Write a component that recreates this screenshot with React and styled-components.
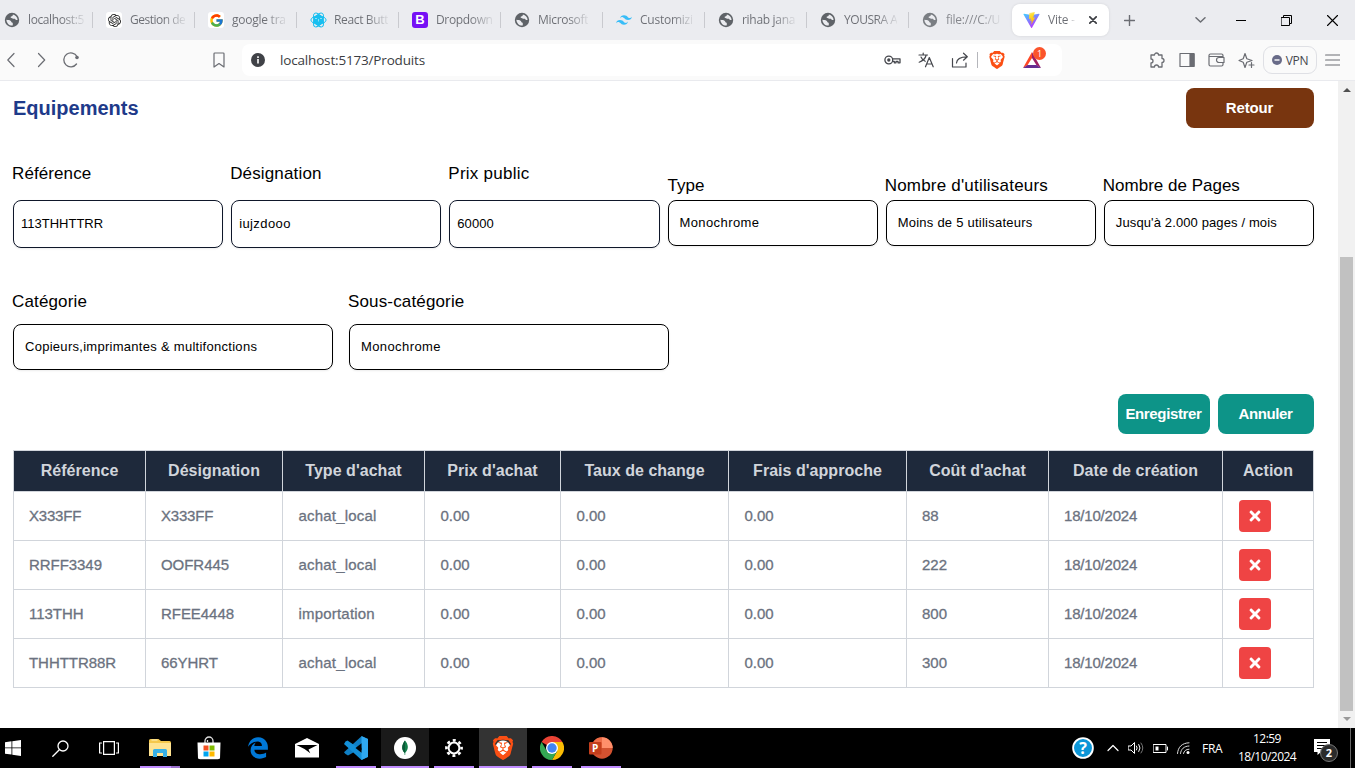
import React from "react";
import styled, { createGlobalStyle } from "styled-components";
import { SiBrave, SiOpenai, SiTailwindcss } from "react-icons/si";
import { FcGoogle } from "react-icons/fc";
import { FaTimes } from "react-icons/fa";
import { FaEdgeLegacy } from "react-icons/fa6";

const Global = createGlobalStyle`
  *, *::before, *::after { box-sizing: border-box; }
  body { margin: 0; background: #fff; overflow: hidden; }
  button, input { font: inherit; }
  svg { display: block; flex: none; }
`;

const uiFont = `"Open Sans", "Noto Sans", sans-serif`;

const Screen = styled.div`
  width: 1355px; height: 768px; display: flex; flex-direction: column;
  font-family: "Liberation Sans", Arial, sans-serif; color: #000; overflow: hidden;
`;

/* ---------- browser chrome ---------- */
const TabStrip = styled.div`
  height: 40px; flex: none; display: flex; align-items: center; background: #ebecf0; font-family: ${uiFont};
`;
const Tab = styled.div`
  width: ${p => (p.$first ? 93 : p.$last ? 103 : 102)}px; height: 16px; flex: none;
  padding-left: ${p => (p.$first ? 4 : 13)}px;
  display: flex; align-items: center; gap: 8px;
  border-right: 1px solid ${p => (p.$last ? "transparent" : "#c9cacf")};
  opacity: ${p => (p.$last ? 0.8 : 1)};
`;
const TabIcon = styled.span`
  width: 16px; height: 16px; flex: none; display: flex; align-items: center; justify-content: center;
  border-radius: 3px; background: ${p => p.$bg || "transparent"};
  color: #fff; font: bold 13px/16px "Liberation Sans", sans-serif;
`;
const TabTitle = styled.span`
  white-space: nowrap; font-size: 12px; line-height: 16px; letter-spacing: ${p => p.$track || 0}px;
  color: transparent; background: linear-gradient(90deg, #6b6d73 ${p => p.$fade || 60}%, rgba(107,109,115,.12) 100%);
  background-clip: text; -webkit-background-clip: text;
`;
const ActiveTab = styled.div`
  width: 97px; height: 32px; flex: none; margin-right: 15px; padding: 0 12px 0 11px;
  display: flex; align-items: center; gap: 8px; background: #fff; border-radius: 8px;
  box-shadow: 0 0 3px rgba(0,0,0,.1);
  & > :last-child { margin-left: auto; }
`;
const WindowButtons = styled.div`
  flex: 1; display: flex; align-items: center; justify-content: flex-end; gap: 35px; padding-right: 17px;
  & > :first-child { margin-right: -5px; }
`;
const Toolbar = styled.div`
  height: 41px; flex: none; display: flex; align-items: center; background: #fafafa;
  border-bottom: 1px solid #e9eaee; font-family: ${uiFont};
`;
const NavButtons = styled.div`
  width: 242px; display: flex; align-items: center; padding: 0 17px 0 4px; gap: 13px;
  & > :last-child { margin-left: auto; }
  & > :nth-child(3) { margin-left: 1px; }
`;
const AddressBar = styled.div`
  width: 820px; height: 32px; background: #fff; border-radius: 8px; padding: 0 19px 0 9px;
  display: flex; align-items: center;
`;
const Url = styled.span`
  flex: 1; margin-left: 15px; font-size: 13.5px; letter-spacing: -0.17px; color: #3b3d42;
`;
const AddressActions = styled.div`display: flex; align-items: center; gap: 17px;`;
const Divider = styled.i`width: 1px; height: 16px; background: #b5b6bb; margin: 0 -7px 0 -9px;`;
const RewardsIcon = styled.span`position: relative; display: flex; width: 20px;`;
const RewardsCount = styled.b`
  position: absolute; left: 10px; top: -5px; width: 13px; height: 13px; border-radius: 50%;
  background: #fb542b; color: #fff; font: 9px/13px ${uiFont}; text-align: center;
`;
const ToolbarRight = styled.div`
  flex: 1; display: flex; align-items: center; justify-content: flex-end; gap: 13px; padding-right: 15px;
`;
const Vpn = styled.div`
  height: 28px; width: 54px; margin: 0 -5px 0 -5px; display: flex; align-items: center; justify-content: center; gap: 4px;
  border: 1px solid #dfe0e5; border-radius: 9px; font-size: 12px; letter-spacing: -0.3px; color: #45474d;
`;

/* ---------- page ---------- */
const Viewport = styled.div`height: 647px; flex: none; display: flex;`;
const Page = styled.main`width: 1338px; padding: 7px 24px 0 13px; display: flex; flex-direction: column;`;
const PageHeader = styled.header`height: 40px; display: flex; align-items: center; justify-content: space-between;`;
const Title = styled.h1`
  margin: 0; font-size: 20px; line-height: 28px; letter-spacing: 0; color: #1e3a8a;
`;
const Button = styled.button`
  width: ${p => p.$w}px; height: 40px; padding: 0 1px 2px 0; border: 0; border-radius: 8px;
  background: ${p => p.$bg || "#0d9488"}; color: #fff; font-weight: bold; font-size: 15px;
  letter-spacing: ${p => p.$track || 0}px;
`;
const SpecRow = styled.div`margin-top: 34px; height: 86px; display: grid; grid-template-columns: repeat(6, 1fr); gap: 8px;`;
const CategoryRow = styled.div`margin-top: 42px; display: flex; gap: 16px;`;
const Field = styled.label`
  width: ${p => (p.$w ? p.$w + "px" : "auto")}; padding-top: ${p => (p.$drop ? 12 : 0)}px;
  display: flex; flex-direction: column; gap: ${p => p.$gap}px;
`;
const FieldLabel = styled.span`
  margin-left: ${p => (p.$shift === undefined ? -1 : p.$shift)}px; font-size: 17px; line-height: 24px; letter-spacing: ${p => p.$track}px; white-space: nowrap;
`;
const Control = styled.span`
  height: ${p => (p.$input ? 48 : 46)}px; padding: 0 ${p => (p.$input ? 7 : 11)}px 2px; display: flex; align-items: center;
  border: 1px solid ${p => (p.$input ? "#0f172a" : "#000")}; border-radius: 8px; background: #fff;
  box-shadow: 0 1px 2px rgba(0,0,0,.08); font-size: 13px; letter-spacing: ${p => p.$track}px; white-space: nowrap;
`;
const Actions = styled.div`margin-top: 24px; display: flex; justify-content: flex-end; gap: 8px;`;
const Table = styled.table`
  margin-top: 16px; width: 1301px; table-layout: fixed; border-collapse: separate; border-spacing: 0;
  border-top: 1px solid #d1d5db; border-left: 1px solid #d1d5db;
`;
const HeadCell = styled.th`
  height: 41px; padding: 0; background: #1e293b; color: #d1d5db; font-size: 16px; text-align: center;
  letter-spacing: ${p => p.$track}px; white-space: nowrap;
  border-right: 1px solid #d1d5db; border-bottom: 1px solid #d1d5db;
`;
const Cell = styled.td`
  height: 49px; padding: 0 15px 2px ${p => p.$pad || 15}px; color: #6b7280; font-size: 15px; letter-spacing: ${p => p.$track || 0}px;
  -webkit-text-stroke: 0.3px #6b7280; white-space: nowrap;
  border-right: 1px solid #d1d5db; border-bottom: 1px solid #d1d5db;
`;
const ActionCell = styled(Cell)`padding: 0 15px 0 16px;`;
const DeleteButton = styled.button`
  width: 32px; height: 32px; padding: 0; border: 0; border-radius: 4px; background: #ef4444; color: #fff;
  display: flex; align-items: center; justify-content: center; -webkit-text-stroke: 0;
`;
const Scrollbar = styled.div`
  width: 17px; background: #f1f1f1; display: flex; flex-direction: column; align-items: center; padding: 7px 0;
`;
const Thumb = styled.div`width: 13px; height: 454px; margin: 165px 0 auto; background: #c1c1c1;`;
const Arrow = styled.i`
  width: 0; height: 0; border: 4px solid transparent; border-top-width: 0; border-bottom: 4px solid #505050;
  transform: ${p => (p.$down ? "rotate(180deg)" : "none")}; opacity: ${p => (p.$down ? 0.55 : 1)};
`;

/* ---------- taskbar ---------- */
const Taskbar = styled.footer`height: 40px; flex: none; display: flex; background: #000; color: #fff; font-family: ${uiFont};`;
const SystemButtons = styled.div`
  width: 136px; display: flex; align-items: center; padding-left: 5px; gap: 31px;
  & > :last-child { margin-left: -1px; }
`;
const Apps = styled.div`display: flex; gap: 1px;`;
const AppSlot = styled.div`
  width: 48px; height: 40px; display: flex; flex-direction: column; align-items: center; justify-content: space-between;
  padding-top: 8px; background: ${p => p.$bg || "transparent"};
`;
const AppIcon = styled.span`width: 24px; height: 24px; display: flex; align-items: center; justify-content: center;`;
const RunningBar = styled.i`
  width: ${p => p.$w || 40}px; height: 2px; background: #c08cff;
  border-right: ${p => (p.$stack ? "9px solid #9a70cc" : "0")};
`;
const LionBacking = styled.span`
  display: flex; color: #fb4f14; background: radial-gradient(circle, #fff 0 7px, transparent 8px);
`;
const Tray = styled.div`flex: 1; display: flex; align-items: center; justify-content: flex-end;`;
const TrayIcons = styled.div`
  display: flex; align-items: center; gap: 9px; margin-right: 12px;
  & > :first-child { margin-right: 4px; }
`;
const Language = styled.span`font-size: 12px; letter-spacing: -0.3px; width: 22px;`;
const Clock = styled.div`
  width: 86px; text-align: center; font-size: 12px; line-height: 18px; letter-spacing: -0.55px;
`;
const Notifications = styled.span`position: relative; width: 36px; margin-left: 4px; height: 16px; margin-top: -2px;`;
const NotificationCount = styled.b`
  position: absolute; left: 6px; top: 5px; width: 18px; height: 18px; border-radius: 50%; border: 1px solid #777;
  background: #2b2b2b; font: bold 11px/16px ${uiFont}; text-align: center;
`;
const DesktopEdge = styled.i`width: 1px; height: 40px; background: #666; margin-right: 4px;`;

/* ---------- drawings ---------- */
const Line = ({ w = 16, h = w, vb = `0 0 ${w} ${h}`, c = "#6b6d73", s = 1.2, children, ...r }) => (
  <svg width={w} height={h} viewBox={vb} fill="none" stroke={c} strokeWidth={s} strokeLinejoin="round" strokeLinecap="round" {...r}>{children}</svg>
);
const Globe = () => (
  <svg width="16" height="16" viewBox="0 0 16 16">
    <circle cx="8" cy="8" r="7.200" fill="#5f6368" />
    <path d="M2.400 7.700c1.800.3 3.200.2 4.100 1 1 .8.5 1.500 1.500 1.700 1 .3 1 1 .7 3.200-3.300.3-6.200-2.400-6.300-5.900zM8.900 2.500c-.2 1.600-.7 1.700-1.700 2-.9.3-.7 1.300.2 1.400 1.100.2 1.300.9 2.300.9 1.200-.1 1.500-.1 1.800.7.300.800 1.300.600 2.100.600-.1-3-2-5-4.700-5.600z" fill="#ebecf0" />
  </svg>
);
const Atom = () => (
  <svg width="17" height="16" viewBox="0 0 16 16" fill="none" stroke="#18bff0" strokeWidth="1">
    <circle cx="8" cy="8" r="5.400" fill="#18bff0" stroke="none" />
    <ellipse cx="8" cy="8" rx="7.600" ry="3.900" />
    <ellipse cx="8" cy="8" rx="7.600" ry="3.900" transform="rotate(60 8 8)" />
    <ellipse cx="8" cy="8" rx="7.600" ry="3.900" transform="rotate(120 8 8)" />
    <path d="M4.500 6.500h2M9.500 6.500h2M8 7v2.500" stroke="#b9ecfb" strokeWidth=".7" />
  </svg>
);
const Vite = () => (
  <svg width="17" height="16" viewBox="0 0 32 32">
    <defs>
      <linearGradient id="va" x1="0" y1="0" x2=".6" y2="1"><stop stopColor="#41d1ff" /><stop offset="1" stopColor="#bd34fe" /></linearGradient>
      <linearGradient id="vb" x1=".4" y1="0" x2=".6" y2="1"><stop stopColor="#ffea83" /><stop offset=".2" stopColor="#ffdd35" /><stop offset="1" stopColor="#ffa800" /></linearGradient>
    </defs>
    <path d="M31.900 5 17 31.300a1 1 0 0 1-1.700 0L.1 5a1 1 0 0 1 1-1.500L16 6.100l14.900-2.600a1 1 0 0 1 1 1.500z" fill="url(#va)" />
    <path d="m22.700 0-11 2.200-.7 11.600 3.700-.8-1 4.900 3-.9-1.400 8.500 8-14.600-4 .8z" fill="url(#vb)" />
  </svg>
);
const Chrome = () => (
  <svg width="24" height="24" viewBox="0 0 24 24">
    <path d="M12 12 1.600 6A12 12 0 0 1 22.400 6z" fill="#ea4335" />
    <path d="M12 6h10.400A12 12 0 0 1 12 24l5.200-9z" fill="#fbbc04" />
    <path d="M6.800 15 1.600 6A12 12 0 0 0 12 24l5.200-9z" fill="#34a853" />
    <circle cx="12" cy="12" r="6" fill="#fff" /><circle cx="12" cy="12" r="4.700" fill="#4285f4" />
  </svg>
);
const Explorer = () => (
  <svg width="22" height="20" viewBox="0 0 22 20">
    <path d="M0 2.500Q0 1 1.500 1h8L12 3h8.500Q22 3 22 4.500V18H0z" fill="#f5c84c" />
    <path d="M0 5h22v13H0z" fill="#ffe391" /><path d="M2.500 1.500h6v1h-6z" fill="#fff3c0" />
    <path d="M4 19v-6.500Q4 11 5.500 11h11q1.500 0 1.500 1.500V19h-4v-4H8v4z" fill="#37b0e6" />
  </svg>
);
const Store = () => (
  <svg width="24" height="24" viewBox="0 0 24 24">
    <path d="M8 8V5a4 4 0 0 1 8 0v3M10.500 6V4" fill="none" stroke="#ddd" strokeWidth="1.300" />
    <path d="M.5 6.500h23L23 22.500l-2 .8H3l-2-.8z" fill="#fff" />
    <path d="M6.500 9.500h5v5h-5z" fill="#f25022" /><path d="M12.500 9.500h5v5h-5z" fill="#7fba00" />
    <path d="M6.500 15.500h5v5h-5z" fill="#00a4ef" /><path d="M12.500 15.500h5v5h-5z" fill="#ffb900" />
  </svg>
);
const Mail = () => (
  <svg width="24" height="20" viewBox="0 0 24 20">
    <path d="M0 6 12 0l12 6v13.500H0z" fill="#fff" />
    <path d="M1.500 7h21L13.500 11.500l1.800 3.700L9.500 11z" fill="#000" />
  </svg>
);
const VsCode = () => (
  <svg width="24" height="24" viewBox="0 0 24 24">
    <path d="M17.500.2 24 3v5L4 19.500 1.500 18 0 16.200z" fill="#0f7fc5" />
    <path d="M1.500 5.500 3.500 4.500 24 18.500v2L17.500 24 0 8z" fill="#1390d8" />
    <path d="M17.500 0 24 3v18l-6.500 3z" fill="#2fa8f0" /><path d="M17.500 7.300v9.400L11.500 12z" fill="#000" />
  </svg>
);
const Mongo = () => (
  <svg width="22" height="22" viewBox="0 0 22 22">
    <circle cx="11" cy="11" r="11" fill="#fff" />
    <path d="M11 3.500c3.500 4 4 8.500.3 12.300L11.200 18h-.6l-.1-2.200C7 12.500 7.800 7.500 11 3.500z" fill="#12804a" />
    <path d="M11 3.500v12.300l-.3.100C7 12.500 7.800 7.500 11 3.500z" fill="#0b5a39" />
  </svg>
);
const Gear = () => (
  <svg width="18" height="18" viewBox="0 0 18 18" fill="none" stroke="#fff">
    <circle cx="9" cy="9" r="5.400" strokeWidth="2" />
    <circle cx="9" cy="9" r="7.600" strokeWidth="2.600" strokeDasharray="2.985 2.985" strokeDashoffset="1.490" />
  </svg>
);
const Slides = () => (
  <svg width="24" height="22" viewBox="0 0 24 22">
    <circle cx="13" cy="11" r="10.700" fill="#d35230" /><path d="M13 .3A10.700 10.700 0 0 1 23.700 11H13z" fill="#ff8f6b" />
    <path d="M2.300 11A10.700 10.700 0 0 1 13 .3V11z" fill="#ed6c47" />
    <rect x="0" y="5" width="12.500" height="12.500" rx="1" fill="#c43e1c" />
    <text x="6.200" y="15" textAnchor="middle" fill="#fff" fontFamily="Open Sans, sans-serif" fontWeight="bold" fontSize="10">P</text>
  </svg>
);
const Help = () => (
  <svg width="22" height="22" viewBox="0 0 22 22">
    <circle cx="11" cy="11" r="9.900" fill="#0c96d8" stroke="#fff" strokeWidth="1.800" />
    <text x="11" y="17" textAnchor="middle" fill="#fff" fontFamily="Open Sans, sans-serif" fontWeight="bold" fontSize="16">?</text>
  </svg>
);

/* ---------- data ---------- */
const tabs = [
  { t: "localhost:5", i: <Globe />, k: -0.4 },
  { t: "Gestion de", i: <SiOpenai size={13} color="#222" />, bg: "#fff", k: -0.5 },
  { t: "google tra", i: <FcGoogle size={15} />, bg: "#fff", k: -0.25 },
  { t: "React Butt", i: <Atom />, k: -0.35 },
  { t: "Dropdown", i: "B", bg: "#7610f5", k: -0.35 },
  { t: "Microsoft", i: <Globe />, k: -0.3 },
  { t: "Customizi", i: <SiTailwindcss size={16} color="#38bdf8" />, k: -0.25 },
  { t: "rihab jana", i: <Globe />, k: -0.3 },
  { t: "YOUSRA A", i: <Globe />, k: -0.45 },
  { t: "file:///C:/U", i: <Globe />, k: -0.25 },
];
const specs = [
  { l: "Référence", v: "113THHTTRR", input: true, lt: 0.1, vt: 0 },
  { l: "Désignation", v: "iujzdooo", input: true, lt: 0.15, vt: 0.4 },
  { l: "Prix public", v: "60000", input: true, lt: 0.25, vt: 0.05 },
  { l: "Type", v: "Monochrome", lt: 0, vt: 0.4, shift: 0 },
  { l: "Nombre d'utilisateurs", v: "Moins de 5 utilisateurs", lt: 0.2, vt: 0.24 },
  { l: "Nombre de Pages", v: "Jusqu'à 2.000 pages / mois", lt: 0, vt: 0.12 },
];
const columns = [
  ["Référence", 132], ["Désignation", 137], ["Type d'achat", 142], ["Prix d'achat", 136], ["Taux de change", 168],
  ["Frais d'approche", 178], ["Coût d'achat", 142], ["Date de création", 174], ["Action", 91],
];
const cellTracks = [-0.05, -0.05, 0.2, 0, 0, 0, 0, -0.2];
const rows = [
  ["X333FF", "X333FF", "achat_local", "0.00", "0.00", "0.00", "88", "18/10/2024"],
  ["RRFF3349", "OOFR445", "achat_local", "0.00", "0.00", "0.00", "222", "18/10/2024"],
  ["113THH", "RFEE4448", "importation", "0.00", "0.00", "0.00", "800", "18/10/2024"],
  ["THHTTR88R", "66YHRT", "achat_local", "0.00", "0.00", "0.00", "300", "18/10/2024"],
];
const apps = [
  { i: <Explorer />, run: 40, stack: true }, { i: <Store /> }, { i: <FaEdgeLegacy size={22} color="#0078d7" /> }, { i: <Mail /> },
  { i: <VsCode />, run: 40 }, { i: <Mongo />, run: 48, bg: "#1a1a1a" }, { i: <Gear />, run: 40 },
  { i: <LionBacking><SiBrave size={24} /></LionBacking>, run: 48, bg: "#333" },
  { i: <Chrome />, run: 40 }, { i: <Slides />, run: 40 },
];

export default function App() {
  return (
    <Screen>
      <Global />
      <TabStrip>
        {tabs.map((t, n) => (
          <Tab key={t.t} $first={n === 0} $last={n === 9}>
            <TabIcon $bg={t.bg}>{t.i}</TabIcon><TabTitle $track={t.k}>{t.t}</TabTitle>
          </Tab>
        ))}
        <ActiveTab>
          <Vite /><TabTitle $track={-0.2} $fade={70}>Vite -</TabTitle>
          <Line w={8} c="#3b3d42" s={1.700}><path d="M.8.8l6.400 6.400M7.200.8.8 7.200" /></Line>
        </ActiveTab>
        <Line w={11} s={1.400}><path d="M5.500.5v10M.5 5.500h10" /></Line>
        <WindowButtons>
          <Line w={11} h={6} s={1.500}><path d="M1 .8l4.500 4.200L10 .8" /></Line>
          <Line w={10} h={10} c="#000" s={1}><path d="M0 5.500h10" /></Line>
          <Line w={11} c="#000" s={1}><path d="M.5 2.500h8v8h-8zM2.500 2.500v-2h8v8h-2" strokeLinejoin="miter" /></Line>
          <Line w={11} c="#000" s={1.100}><path d="M.5.5l10 10M10.500.5l-10 10" /></Line>
        </WindowButtons>
      </TabStrip>
      <Toolbar>
        <NavButtons>
          <Line><path d="M10 1.500 3.800 8l6.200 6.500" /></Line>
          <Line><path d="M5.500 1.500 11.700 8l-6.200 6.500" /></Line>
          <Line s={1.300}><path d="M13.500 12A7 7 0 1 1 14 4.500" /><circle cx="14" cy="5.500" r="1.800" fill="#6b6d73" stroke="none" /></Line>
          <Line w={12} h={16}><path d="M1 1.800Q1 1 1.800 1h8.400q.8 0 .8.800V15l-5-3.500L1 15z" /></Line>
        </NavButtons>
        <AddressBar>
          <svg width="14" height="14" viewBox="0 0 14 14"><circle cx="7" cy="7" r="7" fill="#404247" /><path d="M6.200 6h1.600v4.500H6.200zM6.200 3.300h1.600v1.600H6.200z" fill="#fff" /></svg>
          <Url>localhost:5173/Produits</Url>
          <AddressActions>
            <Line w={17} h={10} c="#45474d" s={1.300}><circle cx="4.800" cy="5" r="3.900" /><circle cx="4.800" cy="5" r="1" fill="#45474d" /><path d="M8.600 3.800H16v4h-2V6.300h-2v1.500h-1.700V6.300H8.600" /></Line>
            <Line w={16} c="#45474d"><path d="M1 3h8.500M5.200 1v2M8.200 3C7.500 6 4.500 9 1.200 10.200M3 5c.8 2 2.200 3.500 4.200 4.300M7.500 14.800 11.300 5.500l3.900 9.300M8.800 12h5" /></Line>
            <Line w={18} h={16} c="#45474d"><path d="M1.500 6.500V15h13.500v-4M5.500 11c.3-4.500 3.500-6.200 10.500-6.200M12.500 1.200 16.300 4.800 12.500 8.200" /></Line>
            <Divider />
            <SiBrave size={18} color="#fb4f14" />
            <RewardsIcon>
              <svg width="18" height="16" viewBox="0 0 18 16"><path d="M9 0 0 16l4.500-2.700L9 6z" fill="#ff4724" /><path d="M9 0l9 16-4.500-2.700L9 6z" fill="#9e1f63" /><path d="M0 16h18l-4.500-3h-9z" fill="#662d91" /></svg>
              <RewardsCount>1</RewardsCount>
            </RewardsIcon>
          </AddressActions>
        </AddressBar>
        <ToolbarRight>
          <Line w={17} s={1.300}><path d="M2 3h3.500a2 2 0 0 1 4 0H13v3.500a2 2 0 0 1 0 4V15H9.500a2 2 0 0 0-4 0H2v-4a2 2 0 0 0 0-4z" /></Line>
          <Line w={16} s={1.200}><path d="M1 1.500h14v13H1z" /><path d="M11 2h4v12h-4z" fill="#6b6d73" /></Line>
          <Line w={17} h={16} s={1.200}><path d="M15 5V3.500Q15 2 13.500 2h-11Q1 2 1 3.500v9Q1 14 2.500 14h11q1.500 0 1.500-1.500V11M1 4.500h14M16 5.500h-5a2.500 2.500 0 0 0 0 5h5z" /></Line>
          <Line w={17} s={1.200}><path d="M7 1.500 8.800 6.700 14 8.500 8.800 10.300 7 15.500 5.200 10.300 1 8.500l4.200-1.800zM13.500 10.500v5M11 13h5" /></Line>
          <Vpn>
            <svg width="10" height="10" viewBox="0 0 10 10"><circle cx="5" cy="5" r="5" fill="#686b88" /><path d="M2.500 4.300h5v1.400h-5z" fill="#fff" /></svg>VPN
          </Vpn>
          <Line w={15} h={12} s={1.200}><path d="M.6 1h14M.6 6h14M.6 11h14" /></Line>
        </ToolbarRight>
      </Toolbar>

      <Viewport>
        <Page>
          <PageHeader><Title>Equipements</Title><Button $w={128} $bg="#78350f" $track={-0.15}>Retour</Button></PageHeader>
          <SpecRow>
            {specs.map(f => (
              <Field key={f.l} $drop={!f.input} $gap={f.input ? 14 : 2}>
                <FieldLabel $track={f.lt} $shift={f.shift}>{f.l}</FieldLabel>
                <Control $input={f.input} $track={f.vt}>{f.v}</Control>
              </Field>
            ))}
          </SpecRow>
          <CategoryRow>
            <Field $w={320} $gap={10}><FieldLabel $track={0.15}>Catégorie</FieldLabel><Control $track={0.28}>Copieurs,imprimantes &amp; multifonctions</Control></Field>
            <Field $w={320} $gap={10}><FieldLabel $track={0.15}>Sous-catégorie</FieldLabel><Control $track={0.4}>Monochrome</Control></Field>
          </CategoryRow>
          <Actions><Button $w={92} $track={-0.35}>Enregistrer</Button><Button $w={96} $track={-0.4}>Annuler</Button></Actions>
          <Table>
            <colgroup>{columns.map(([n, w]) => <col key={n} width={w} />)}</colgroup>
            <thead><tr>{columns.map(([n]) => <HeadCell key={n} $track={0.03}>{n}</HeadCell>)}</tr></thead>
            <tbody>
              {rows.map(r => (
                <tr key={r[0]}>
                  {r.map((c, n) => <Cell key={n} $track={c === "X333FF" ? -0.2 : cellTracks[n]} $pad={n > 1 && n < 6 ? 15.5 : 15}>{c}</Cell>)}
                  <ActionCell><DeleteButton aria-label="Supprimer"><FaTimes size={16} /></DeleteButton></ActionCell>
                </tr>
              ))}
            </tbody>
          </Table>
        </Page>
        <Scrollbar><Arrow /><Thumb /><Arrow $down /></Scrollbar>
      </Viewport>

      <Taskbar>
        <SystemButtons>
          <svg width="16" height="16" viewBox="0 0 16 16" fill="#fff"><path d="M0 2.200 6.500 1.300v6.200H0zM7.300 1.200 16 0v7.500H7.300zM0 8.300h6.500v6.300L0 13.700zM7.300 8.300H16V16l-8.700-1.200z" /></svg>
          <Line w={17} c="#fff" s={1.300}><circle cx="11" cy="6" r="5" /><path d="M7.300 9.700.8 16.200" /></Line>
          <Line w={20} h={14} c="#fff" s={1.200} strokeLinejoin="miter"><path d="M4.600.6h10.800v12.800H4.600zM2.500 2H.6v10h1.900M17.500 2h1.900v10h-1.900" /></Line>
        </SystemButtons>
        <Apps>
          {apps.map((a, n) => (
            <AppSlot key={n} $bg={a.bg}><AppIcon>{a.i}</AppIcon>{a.run && <RunningBar $w={a.run} $stack={a.stack} />}</AppSlot>
          ))}
        </Apps>
        <Tray>
          <TrayIcons>
            <Help />
            <Line w={12} h={8} c="#fff"><path d="M1 6.500l5-5 5 5" /></Line>
            <Line w={16} h={14} c="#fff" s={1}><path d="M.5 5h2.500L6.500 1.500v11L3 9H.5zM8.500 5q1.500 2 0 4M10.800 3.500q2.600 3.500 0 7" /><path d="M13 2q3.800 5 0 10" stroke="#777" /></Line>
            <Line w={15} h={9} c="#fff" s={1}><path d="M.5.5h12.500v8H.5zM14.500 3v3" strokeLinejoin="miter" /><path d="M2.500 2.500h3v4h-3z" fill="#fff" stroke="none" /></Line>
            <Line w={13} h={12} c="#ddd" s={1}><path d="M.5 11.500C1 5 5 1 12 .8M3.500 11.500C4 7 7 4.200 12 4M6.500 11.500C7 9 9 7.200 12 7.200" /><circle cx="11" cy="10.500" r="1.500" fill="#fff" stroke="none" /></Line>
          </TrayIcons>
          <Language>FRA</Language>
          <Clock>12:59<br />18/10/2024</Clock>
          <Notifications>
            <svg width="16" height="16" viewBox="0 0 16 16"><path d="M0 0h16v13H7l-3.500 3v-3H0z" fill="#fff" /><path d="M3 3.500h10M3 6.500h10M3 9.500h6" stroke="#000" /></svg>
            <NotificationCount>2</NotificationCount>
          </Notifications>
          <DesktopEdge />
        </Tray>
      </Taskbar>
    </Screen>
  );
}
